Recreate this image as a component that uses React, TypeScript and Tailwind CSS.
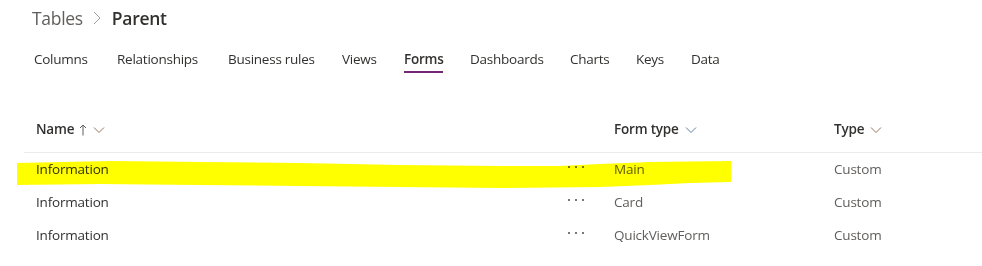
import React from "react";

const tabs: { label: string; w: string; active?: boolean }[] = [
  { label: "Columns", w: "w-[83px]" },
  { label: "Relationships", w: "w-[111px]" },
  { label: "Business rules", w: "w-[114px]" },
  { label: "Views", w: "w-[62px]" },
  { label: "Forms", w: "w-[66px]", active: true },
  { label: "Dashboards", w: "w-[100px]" },
  { label: "Charts", w: "w-[66px]" },
  { label: "Keys", w: "w-[55px]" },
  { label: "Data", w: "w-[50px]" },
];

const rows = [
  { name: "Information", form: "Main", type: "Custom" },
  { name: "Information", form: "Card", type: "Custom" },
  { name: "Information", form: "QuickViewForm", type: "Custom" },
];

function Chevron({ color }: { color: string }) {
  return (
    <svg width="12" height="8" viewBox="0 0 12 8" className="ml-[6px]">
      <path d="M1 1.5 L6 6.5 L11 1.5" fill="none" stroke={color} strokeWidth="1" />
    </svg>
  );
}

function UpArrow() {
  return (
    <svg width="8" height="12" viewBox="0 0 8 12" className="ml-[5px]">
      <path d="M4 11.5 V1 M1 4 L4 1 L7 4" fill="none" stroke="#605e5c" strokeWidth="1" />
    </svg>
  );
}

function Dots() {
  return (
    <div className="flex gap-[5px] items-center mb-[5px]">
      <span className="block w-[2px] h-[2px] bg-[#7a7876]" />
      <span className="block w-[2px] h-[2px] bg-[#7a7876]" />
      <span className="block w-[2px] h-[2px] bg-[#7a7876]" />
    </div>
  );
}

export default function App() {
  return (
    <div
      className="relative w-[982px] h-[266px] bg-white overflow-hidden text-[#323130]"
      style={{ fontFamily: '"Segoe UI", "Open Sans", "Noto Sans", sans-serif' }}
    >
      {/* Breadcrumb */}
      <div className="flex items-center h-[36px] pl-[32px] text-[17.5px] leading-[36px] tracking-[-0.3px]">
        <span className="text-[#605e5c]">Tables</span>
        <svg width="8" height="14" viewBox="0 0 8 14" className="ml-[10px] mr-[11px]">
          <path d="M1 1 L7 7 L1 13" fill="none" stroke="#a19f9d" strokeWidth="1" />
        </svg>
        <span className="font-semibold text-[#323130]">Parent</span>
      </div>

      {/* Tabs */}
      <div className="flex pl-[34px] mt-[12px] text-[13.5px] tracking-[-0.25px]">
        {tabs.map((t) => (
          <div key={t.label} className={`${t.w} shrink-0 flex`}>
            <div className="flex flex-col">
              <span
                className={`leading-[22px] whitespace-nowrap ${
                  t.active ? "font-semibold text-[#323130]" : "text-[#323130]"
                }`}
              >
                {t.label}
              </span>
              <span
                className={`block h-[2px] mt-[1px] ${t.active ? "bg-[#742774]" : "bg-transparent"}`}
              />
            </div>
          </div>
        ))}
      </div>

      {/* Table */}
      <div className="ml-[24px] mt-[36px] text-[13.5px] tracking-[-0.2px]">
        <div className="flex h-[44px] pb-[2px] items-center border-b border-[#edebe9]">
          <div className="w-[590px] shrink-0 pl-[12px] flex items-center font-semibold">
            <span>Name</span>
            <UpArrow />
            <Chevron color="#9a7358" />
          </div>
          <div className="w-[220px] shrink-0 flex items-center font-semibold">
            <span>Form type</span>
            <Chevron color="#5f7ea3" />
          </div>
          <div className="flex items-center font-semibold">
            <span>Type</span>
            <Chevron color="#9a7358" />
          </div>
        </div>
        {rows.map((r, i) => (
          <div key={i} className="flex h-[33px] items-center">
            <div className="w-[590px] shrink-0 pl-[12px] pr-[30px] flex items-center justify-between">
              <span className="text-[#323130]">{r.name}</span>
              <Dots />
            </div>
            <div className="w-[220px] shrink-0 text-[#605e5c]">{r.form}</div>
            <div className="text-[#605e5c]">{r.type}</div>
          </div>
        ))}
      </div>

      {/* Yellow highlighter stroke */}
      <svg
        className="absolute left-0 top-0 pointer-events-none mix-blend-multiply"
        width="982"
        height="266"
        viewBox="0 0 982 266"
      >
        <polygon
          fill="#ffff00"
          points="17,163 110,161 200,162 300,163 400,165 500,166 560,166 600,164 650,162 731,161 731,182 690,183 650,185 600,187 500,188 400,187 300,186 200,185 100,184 17,185"
        />
      </svg>
    </div>
  );
}
